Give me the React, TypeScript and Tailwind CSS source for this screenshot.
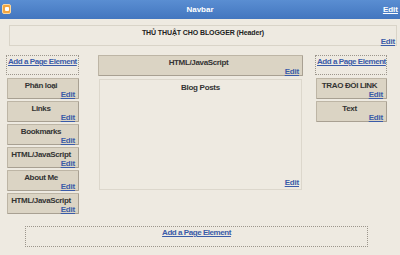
import React from "react";

const font = { fontFamily: '"Liberation Sans", Arial, sans-serif' };

function Edit({ className = "" }: { className?: string }) {
  return (
    <span className={"text-[8px] leading-[9px] font-bold text-[#3a5ba8] underline tracking-[-0.2px] " + className}>Edit</span>
  );
}

function Widget({ title }: { title: string }) {
  return (
    <div className="h-[21px] flex flex-col border border-[#bdb5a5] border-r-[#a8a092] border-b-[#a8a092] bg-[#dbd4c4] rounded-[1px]">
      <div className="text-center text-[8px] leading-[9px] font-bold text-[#333] pt-[2px] pr-[4px] whitespace-nowrap tracking-[-0.35px]">{title}</div>
      <div className="flex justify-end pr-[3px]">
        <Edit />
      </div>
    </div>
  );
}

function AddBox({ className = "" }: { className?: string }) {
  return (
    <div className={"h-[20px] border border-dotted border-[#9c968c] " + className}>
      <div className="text-[8px] leading-[11px] font-bold text-[#3a5ba8] underline pl-[1px] whitespace-nowrap tracking-[-0.45px]">Add a Page Element</div>
    </div>
  );
}

export default function App() {
  return (
    <div className="w-[400px] h-[255px] bg-[#eeeae1] overflow-hidden flex flex-col" style={font}>
      <div className="h-[19px] shrink-0 bg-gradient-to-b from-[#5a8ed2] to-[#4376bf] relative flex items-center justify-center">
        <div className="absolute left-[2px] top-[4px] w-[9px] h-[10px] rounded-[2px] bg-[#f4a640] border border-[#fbd9a0] flex items-center justify-center">
          <div className="w-[4px] h-[4px] bg-white rounded-[1px]" />
        </div>
        <span className="text-[8px] font-bold text-white">Navbar</span>
        <span className="absolute right-[2px] top-[4px] text-[8px] font-bold text-white underline">Edit</span>
      </div>

      <div className="mt-[6px] ml-[9px] mr-[3px] h-[21px] shrink-0 border border-[#d9d4c8] flex flex-col">
        <div className="text-center text-[7px] leading-[9px] font-bold text-[#222] pt-[2px] whitespace-nowrap tracking-[-0.1px]">THỦ THUẬT CHO BLOGGER (Header)</div>
        <div className="flex justify-end pr-[1px]">
          <Edit />
        </div>
      </div>

      <div className="mt-[9px] flex shrink-0">
        <div className="ml-[6px] w-[73px] flex flex-col">
          <AddBox />
          <div className="mt-[3px] ml-[1px] flex flex-col gap-[2px]">
            <Widget title="Phân loại" />
            <Widget title="Links" />
            <Widget title="Bookmarks" />
            <Widget title="HTML/JavaScript" />
            <Widget title="About Me" />
            <Widget title="HTML/JavaScript" />
          </div>
        </div>

        <div className="ml-[19px] w-[205px] flex flex-col">
          <Widget title="HTML/JavaScript" />
          <div className="mt-[3px] mx-[1px] h-[111px] border border-[#dcd7cc] flex flex-col">
            <div className="text-center text-[8px] leading-[9px] font-bold text-[#333] pt-[3px] tracking-[-0.3px]">Blog Posts</div>
            <div className="flex-1" />
            <div className="flex justify-end pr-[2px] pb-[2px]">
              <Edit />
            </div>
          </div>
        </div>

        <div className="ml-[12px] w-[72px] flex flex-col">
          <AddBox />
          <div className="mt-[3px] ml-[1px] flex flex-col gap-[2px]">
            <Widget title="TRAO ĐỔI LINK" />
            <Widget title="Text" />
          </div>
        </div>
      </div>

      <div className="mt-[12px] ml-[25px] w-[343px] h-[21px] shrink-0 border border-dotted border-[#9c968c] flex justify-center">
        <span className="text-[8px] leading-[10px] font-bold text-[#3a5ba8] underline pt-[1px] whitespace-nowrap tracking-[-0.45px]">Add a Page Element</span>
      </div>
    </div>
  );
}
